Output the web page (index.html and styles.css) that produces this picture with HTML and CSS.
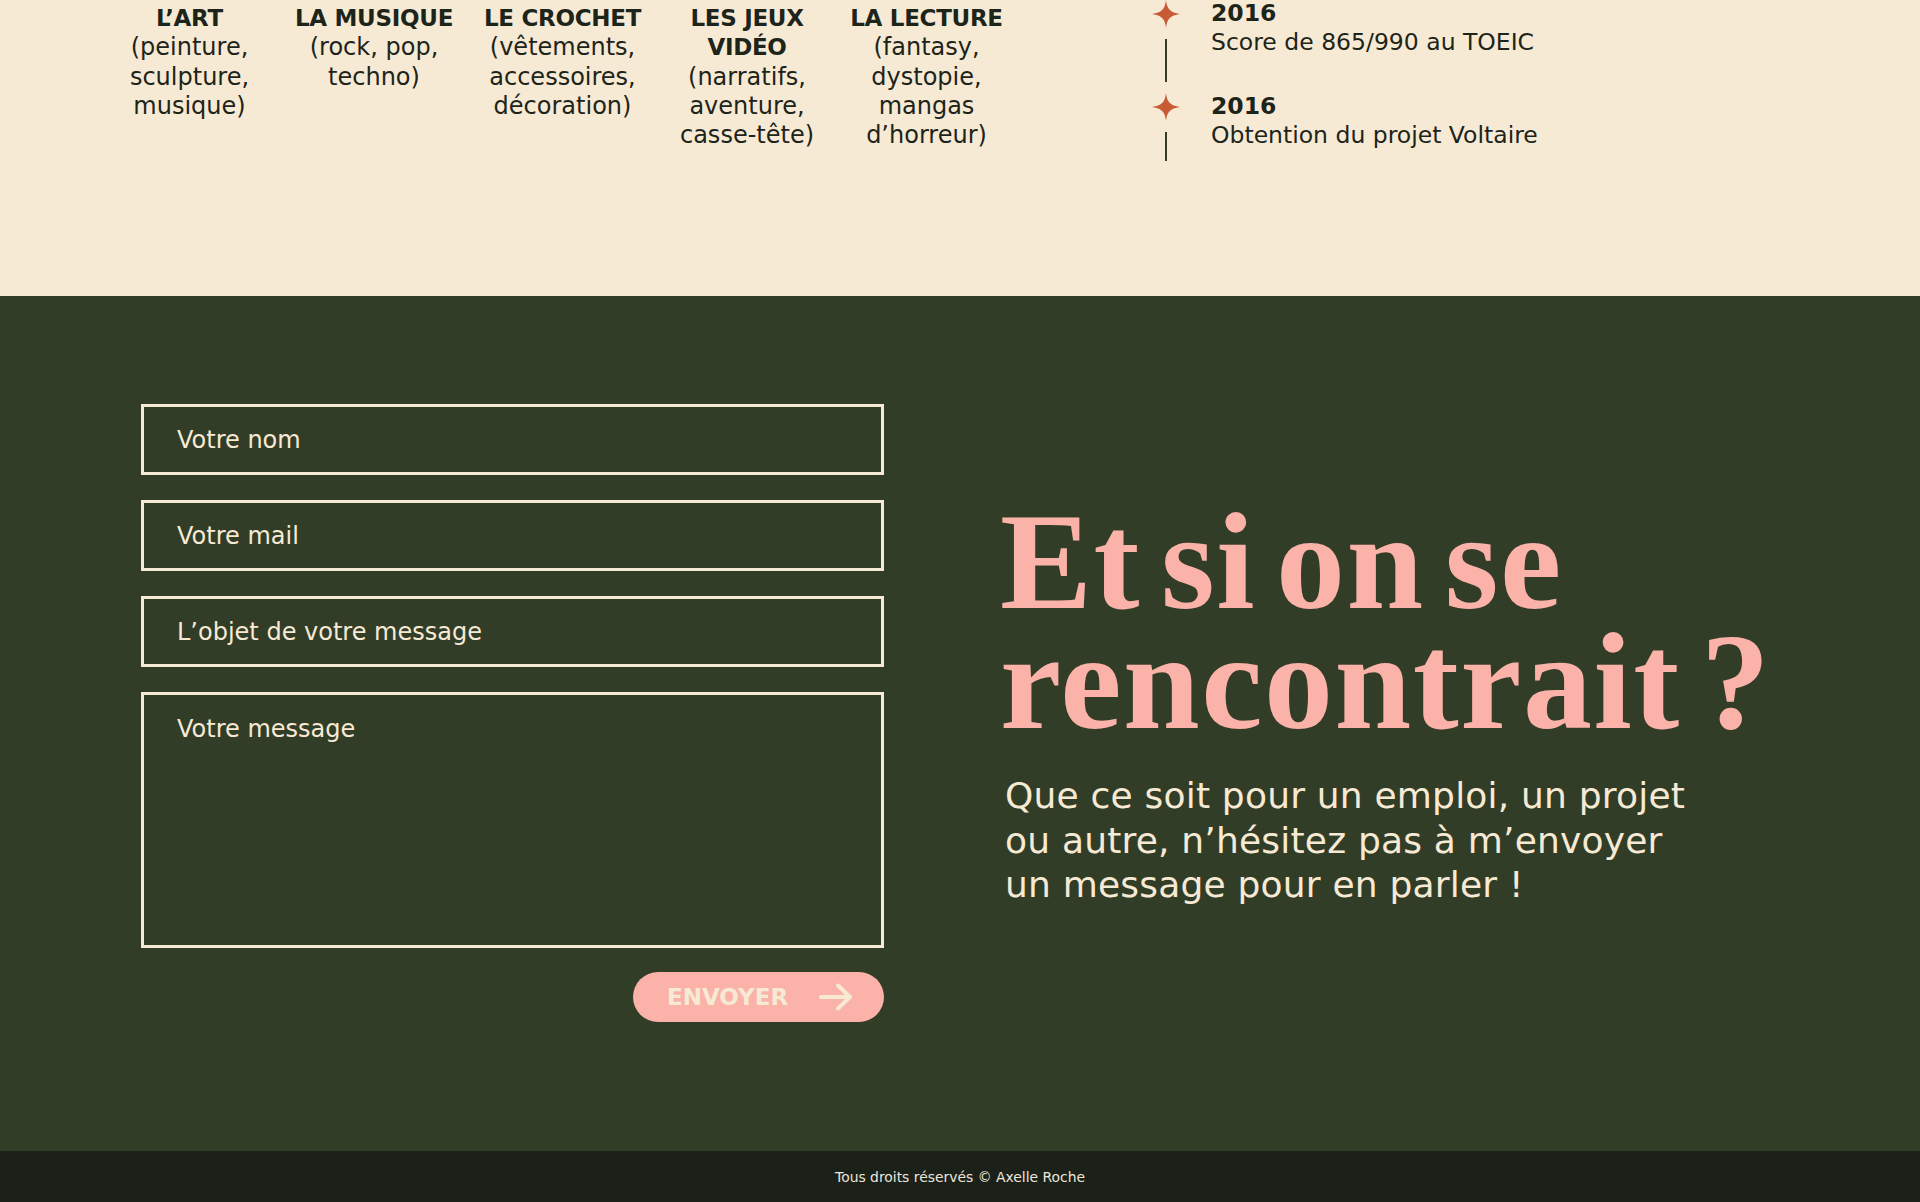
FILE: index.html
```html
<!DOCTYPE html>
<html lang="fr">
<head>
<meta charset="utf-8">
<title>Axelle Roche</title>
<link rel="stylesheet" href="styles.css">
</head>
<body>
<section class="about">
  <div class="hobbies">
    <div class="hobby"><strong>L’ART</strong><span>(peinture, sculpture, musique)</span></div>
    <div class="hobby"><strong>LA MUSIQUE</strong><span>(rock, pop, techno)</span></div>
    <div class="hobby"><strong>LE CROCHET</strong><span>(vêtements, accessoires, décoration)</span></div>
    <div class="hobby hobby-narrow"><strong>LES JEUX VIDÉO</strong><span>(narratifs, aventure, casse-tête)</span></div>
    <div class="hobby"><strong>LA LECTURE</strong><span>(fantasy, dystopie, mangas d’horreur)</span></div>
  </div>
  <ul class="timeline">
    <li class="tl-item">
      <div class="tl-marker">
        <svg class="star" viewBox="0 0 28 28" width="28" height="28"><path d="M14 0 C15 9 18 12.5 28 14 C18 15.5 15 19 14 28 C13 19 10 15.5 0 14 C10 12.5 13 9 14 0 Z"/></svg>
        <span class="tl-line"></span>
      </div>
      <div class="tl-text"><strong>2016</strong><span>Score de 865/990 au TOEIC</span></div>
    </li>
    <li class="tl-item">
      <div class="tl-marker">
        <svg class="star" viewBox="0 0 28 28" width="28" height="28"><path d="M14 0 C15 9 18 12.5 28 14 C18 15.5 15 19 14 28 C13 19 10 15.5 0 14 C10 12.5 13 9 14 0 Z"/></svg>
        <span class="tl-line tl-line-short"></span>
      </div>
      <div class="tl-text"><strong>2016</strong><span>Obtention du projet Voltaire</span></div>
    </li>
  </ul>
</section>

<section class="contact">
  <form class="contact-form">
    <input class="field" type="text" placeholder="Votre nom">
    <input class="field" type="email" placeholder="Votre mail">
    <input class="field" type="text" placeholder="L’objet de votre message">
    <textarea class="field field-area" placeholder="Votre message"></textarea>
    <button class="send" type="button">
      <span>ENVOYER</span>
      <svg viewBox="0 0 34 28" width="34" height="28"><path d="M2 14 H31 M19 2.5 L31 14 L19 25.5" fill="none" stroke="currentColor" stroke-width="4" stroke-linecap="round" stroke-linejoin="round"/></svg>
    </button>
  </form>
  <div class="contact-text">
    <h2><span class="h-line">Et si on se</span><span class="h-line">rencontrait ?</span></h2>
    <p>Que ce soit pour un emploi, un projet<br>ou autre, n’hésitez pas à m’envoyer<br>un message pour en parler !</p>
  </div>
</section>

<footer class="footer">Tous droits réservés © Axelle Roche</footer>
</body>
</html>
```

FILE: styles.css
```css
* { box-sizing: border-box; }

html, body {
  margin: 0;
  padding: 0;
}

body {
  font-family: "DejaVu Sans", Inter, "Noto Sans", sans-serif;
  color: #1d2419;
  background: #f7ead5;
  overflow: hidden;
}

/* ---------- top (scrolled) section ---------- */
.about {
  height: 296px;
  background: #f7ead5;
  display: flex;
  align-items: flex-start;
  padding-top: 4px;
}

.hobbies {
  display: grid;
  grid-template-columns: 181px 188px 189px 180px 179px;
  margin-left: 99px;
  flex: none;
}

.hobby {
  display: flex;
  flex-direction: column;
  align-items: center;
  text-align: center;
  font-size: 24px;
  line-height: 29.3px;
  padding: 0 4px;
}

.hobby strong {
  font-size: 23px;
  font-weight: 700;
  letter-spacing: -0.3px;
}

.hobby-narrow {
  padding: 0 20px;
}

.timeline {
  list-style: none;
  margin: -5px 0 0 135px;
  padding: 0;
}

.tl-item {
  display: flex;
  gap: 30px;
  margin-bottom: 10px;
}

.tl-marker {
  width: 30px;
  display: flex;
  flex-direction: column;
  align-items: center;
  padding-top: 1px;
}

.star {
  display: block;
  fill: #c95a36;
}

.tl-line {
  display: block;
  width: 2px;
  height: 43px;
  margin-top: 11px;
  background: #323d28;
}

.tl-line-short {
  height: 29px;
}

.tl-text {
  display: flex;
  flex-direction: column;
  font-size: 23.5px;
  line-height: 29px;
  color: #1d2419;
}

.tl-text strong {
  font-weight: 700;
}

/* ---------- contact section ---------- */
.contact {
  height: 855px;
  background: #323d28;
  display: flex;
  align-items: flex-start;
  padding: 108px 0 0 141px;
  gap: 116px;
}

.contact-form {
  flex: none;
  width: 743px;
  display: flex;
  flex-direction: column;
  gap: 25px;
}

.field {
  display: block;
  width: 100%;
  height: 71px;
  border: 3px solid #f7ead5;
  border-radius: 0;
  background: transparent;
  padding: 0 33px;
  font-family: inherit;
  font-size: 24px;
  color: #f7ead5;
  outline: none;
}

.field::placeholder {
  color: #f7ead5;
  opacity: 1;
}

.field-area {
  height: 256px;
  padding: 20px 33px;
  line-height: 28px;
  resize: none;
}

.send {
  align-self: flex-end;
  width: 251px;
  height: 50px;
  margin-top: -1px;
  border: none;
  border-radius: 25px;
  background: #fbb2a8;
  color: #f7ead5;
  display: flex;
  align-items: center;
  justify-content: space-between;
  padding: 0 31px 0 34px;
  font-family: inherit;
  font-size: 23px;
  font-weight: 700;
  cursor: pointer;
}

.send svg {
  display: block;
}

.contact-text {
  flex: none;
  margin-top: 98px;
}

.contact-text h2 {
  margin: 0;
  font-family: "Liberation Serif", "Times New Roman", serif;
  font-weight: 700;
  font-size: 138px;
  line-height: 120px;
  letter-spacing: 1.5px;
  word-spacing: -16px;
  color: #fbb2a8;
}

.h-line {
  display: block;
  height: 120px;
  white-space: nowrap;
}

.contact-text p {
  margin: 32px 0 0 5px;
  font-size: 36px;
  line-height: 44.5px;
  letter-spacing: 0.2px;
  color: #f7ead5;
}

/* ---------- footer ---------- */
.footer {
  height: 51px;
  background: #1b2118;
  color: #ece6da;
  font-size: 13.9px;
  display: flex;
  align-items: center;
  justify-content: center;
  padding-top: 1px;
}
```
